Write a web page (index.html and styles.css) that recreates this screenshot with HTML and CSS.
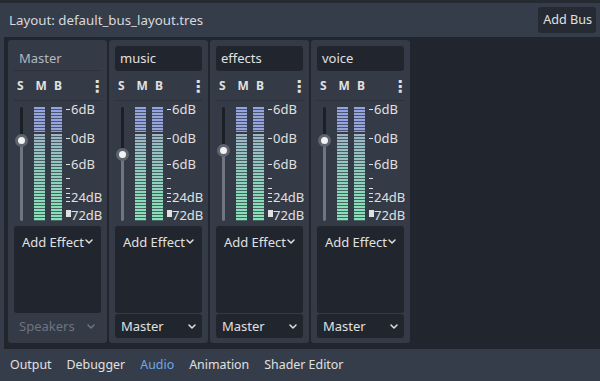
FILE: index.html
```html
<!DOCTYPE html>
<html lang="en">

<head>
    <meta charset="UTF-8">
    <meta name="viewport" content="width=device-width, initial-scale=1.0">
    <title>Audio Buses</title>
    <link rel="stylesheet" href="styles.css">
</head>

<body>
    <div class="editor">
        <div class="toolbar">
            <span class="layout_name">Layout: default_bus_layout.tres</span>
            <span class="add_bus">Add Bus</span>
        </div>

        <div class="buses">
            <div class="bus master">
                <div class="bus_name">Master</div>
                <div class="bus_toggles">
                    <span>S</span><span>M</span><span>B</span>
                    <span class="bus_more">&#8942;</span>
                </div>
                <div class="meter">
                    <div class="slider" style="--pos: 34px">
                        <div class="fill"></div>
                        <div class="grab"></div>
                    </div>
                    <div class="bar"></div>
                    <div class="bar"></div>
                    <div class="scale">
                        <i class="tick t1"></i><b class="l1">6dB</b>
                        <i class="tick t2"></i><b class="l2">0dB</b>
                        <i class="tick t3"></i><b class="l3">6dB</b>
                        <i class="tick t4"></i>
                        <i class="tick t5"></i>
                        <i class="tick t6"></i>
                        <i class="tick t7"></i><b class="l4">24dB</b>
                        <i class="tick t8"></i>
                        <i class="block"></i><b class="l5">72dB</b>
                    </div>
                </div>
                <div class="effects">
                    <div class="add_effect">Add Effect<svg width="8" height="5" viewBox="0 0 8 5"><path d="M1 1l3 3 3-3" fill="none" stroke="currentColor" stroke-width="1.5" stroke-linecap="round" stroke-linejoin="round"/></svg></div>
                </div>
                <div class="send disabled">Speakers<svg width="8" height="5" viewBox="0 0 8 5"><path d="M1 1l3 3 3-3" fill="none" stroke="currentColor" stroke-width="1.5" stroke-linecap="round" stroke-linejoin="round"/></svg></div>
            </div>

            <div class="bus">
                <div class="bus_name">music</div>
                <div class="bus_toggles">
                    <span>S</span><span>M</span><span>B</span>
                    <span class="bus_more">&#8942;</span>
                </div>
                <div class="meter">
                    <div class="slider" style="--pos: 48px">
                        <div class="fill"></div>
                        <div class="grab"></div>
                    </div>
                    <div class="bar"></div>
                    <div class="bar"></div>
                    <div class="scale">
                        <i class="tick t1"></i><b class="l1">6dB</b>
                        <i class="tick t2"></i><b class="l2">0dB</b>
                        <i class="tick t3"></i><b class="l3">6dB</b>
                        <i class="tick t4"></i>
                        <i class="tick t5"></i>
                        <i class="tick t6"></i>
                        <i class="tick t7"></i><b class="l4">24dB</b>
                        <i class="tick t8"></i>
                        <i class="block"></i><b class="l5">72dB</b>
                    </div>
                </div>
                <div class="effects">
                    <div class="add_effect">Add Effect<svg width="8" height="5" viewBox="0 0 8 5"><path d="M1 1l3 3 3-3" fill="none" stroke="currentColor" stroke-width="1.5" stroke-linecap="round" stroke-linejoin="round"/></svg></div>
                </div>
                <div class="send">Master<svg width="8" height="5" viewBox="0 0 8 5"><path d="M1 1l3 3 3-3" fill="none" stroke="currentColor" stroke-width="1.5" stroke-linecap="round" stroke-linejoin="round"/></svg></div>
            </div>

            <div class="bus">
                <div class="bus_name">effects</div>
                <div class="bus_toggles">
                    <span>S</span><span>M</span><span>B</span>
                    <span class="bus_more">&#8942;</span>
                </div>
                <div class="meter">
                    <div class="slider" style="--pos: 44px">
                        <div class="fill"></div>
                        <div class="grab"></div>
                    </div>
                    <div class="bar"></div>
                    <div class="bar"></div>
                    <div class="scale">
                        <i class="tick t1"></i><b class="l1">6dB</b>
                        <i class="tick t2"></i><b class="l2">0dB</b>
                        <i class="tick t3"></i><b class="l3">6dB</b>
                        <i class="tick t4"></i>
                        <i class="tick t5"></i>
                        <i class="tick t6"></i>
                        <i class="tick t7"></i><b class="l4">24dB</b>
                        <i class="tick t8"></i>
                        <i class="block"></i><b class="l5">72dB</b>
                    </div>
                </div>
                <div class="effects">
                    <div class="add_effect">Add Effect<svg width="8" height="5" viewBox="0 0 8 5"><path d="M1 1l3 3 3-3" fill="none" stroke="currentColor" stroke-width="1.5" stroke-linecap="round" stroke-linejoin="round"/></svg></div>
                </div>
                <div class="send">Master<svg width="8" height="5" viewBox="0 0 8 5"><path d="M1 1l3 3 3-3" fill="none" stroke="currentColor" stroke-width="1.5" stroke-linecap="round" stroke-linejoin="round"/></svg></div>
            </div>

            <div class="bus">
                <div class="bus_name">voice</div>
                <div class="bus_toggles">
                    <span>S</span><span>M</span><span>B</span>
                    <span class="bus_more">&#8942;</span>
                </div>
                <div class="meter">
                    <div class="slider" style="--pos: 34px">
                        <div class="fill"></div>
                        <div class="grab"></div>
                    </div>
                    <div class="bar"></div>
                    <div class="bar"></div>
                    <div class="scale">
                        <i class="tick t1"></i><b class="l1">6dB</b>
                        <i class="tick t2"></i><b class="l2">0dB</b>
                        <i class="tick t3"></i><b class="l3">6dB</b>
                        <i class="tick t4"></i>
                        <i class="tick t5"></i>
                        <i class="tick t6"></i>
                        <i class="tick t7"></i><b class="l4">24dB</b>
                        <i class="tick t8"></i>
                        <i class="block"></i><b class="l5">72dB</b>
                    </div>
                </div>
                <div class="effects">
                    <div class="add_effect">Add Effect<svg width="8" height="5" viewBox="0 0 8 5"><path d="M1 1l3 3 3-3" fill="none" stroke="currentColor" stroke-width="1.5" stroke-linecap="round" stroke-linejoin="round"/></svg></div>
                </div>
                <div class="send">Master<svg width="8" height="5" viewBox="0 0 8 5"><path d="M1 1l3 3 3-3" fill="none" stroke="currentColor" stroke-width="1.5" stroke-linecap="round" stroke-linejoin="round"/></svg></div>
            </div>
        </div>

        <div class="tabs">
            <span>Output</span>
            <span>Debugger</span>
            <span class="active">Audio</span>
            <span>Animation</span>
            <span>Shader Editor</span>
        </div>
    </div>
</body>

</html>
```

FILE: styles.css
```css
* {
    margin: 0;
    padding: 0;
    box-sizing: border-box;
}

body {
    background: #363d4a;
    font-family: "Noto Sans", "DejaVu Sans", sans-serif;
    font-size: 13px;
    color: #e0e0e0;
    overflow: hidden;
}

.editor {
    width: 600px;
    height: 381px;
    border-top: 3px solid #262b33;
    display: flex;
    flex-direction: column;
}

/* top toolbar */
.toolbar {
    height: 34px;
    display: flex;
    align-items: center;
    justify-content: space-between;
    padding: 0 4px 0 9px;
}

.layout_name {
    font-size: 13.3px;
    color: #d6d9de;
}

.add_bus {
    height: 26px;
    line-height: 26px;
    padding: 0 4px 0 5px;
    background: #262b33;
    border-radius: 3px;
    font-size: 12.6px;
}

/* bus list */
.buses {
    height: 312px;
    margin-left: 4px;
    padding: 3px 4px;
    background: #21252d;
    display: flex;
    gap: 2px;
}

.bus {
    width: 99px;
    height: 303px;
    padding: 6px 6px 4px;
    background: #343a46;
    border-radius: 3px;
    display: flex;
    flex-direction: column;
}

.bus_name {
    height: 25px;
    line-height: 25px;
    padding-left: 5px;
    background: #21252d;
    border-radius: 3px;
}

.master .bus_name {
    background: none;
    color: #b4b8bf;
    border-bottom: 1px solid #2b303a;
    border-radius: 0;
}

.bus_toggles {
    height: 30px;
    display: flex;
    align-items: center;
    padding-left: 3px;
    border-bottom: 1px solid #2b303a;
    font-weight: bold;
    font-size: 12px;
}

.bus_toggles span {
    width: 18.5px;
}

.bus_toggles .bus_more {
    margin-left: auto;
    width: 12px;
    font-size: 16px;
}

/* meter */
.meter {
    height: 116px;
    margin-top: 5px;
    display: flex;
}

.slider {
    width: 14px;
    position: relative;
}

.slider::before {
    content: "";
    position: absolute;
    left: 6px;
    top: 1px;
    bottom: 1px;
    width: 3px;
    border-radius: 2px;
    background: #1b1f26;
}

.slider .fill {
    position: absolute;
    left: 6px;
    top: var(--pos);
    bottom: 1px;
    width: 3px;
    border-radius: 2px;
    background: #70767f;
}

.slider .grab {
    position: absolute;
    left: 1px;
    top: calc(var(--pos) - 6px);
    width: 13px;
    height: 13px;
    border-radius: 50%;
    background: #5f656f;
    border: 3px solid #5f656f;
}

.slider .grab::after {
    content: "";
    display: block;
    width: 7px;
    height: 7px;
    border-radius: 50%;
    background: #f2f2f2;
}

.bar {
    width: 11px;
    margin: 1px 0 1px 6px;
    background:
        repeating-linear-gradient(to bottom, transparent 0 2px, rgba(52, 58, 70, 0.75) 2px 3px),
        linear-gradient(to bottom, #95a3de 0, #95a3de 25px, #343a46 25px, #343a46 27px, #9ab6c6 27px, #8fcfbd 70px, #86e3b6 100%);
}

.scale {
    flex: 1;
    margin-left: 2px;
    position: relative;
}

.scale .tick {
    position: absolute;
    left: 2px;
    width: 4px;
    height: 1px;
    background: #e0e0e0;
}

.scale .block {
    position: absolute;
    left: 2px;
    top: 104px;
    width: 5px;
    height: 7px;
    background: #e0e0e0;
}

.scale b {
    position: absolute;
    left: 7px;
    font-weight: normal;
    line-height: 14px;
}

.t1 { top: 3px; }
.t2 { top: 32px; }
.t3 { top: 58px; }
.t4 { top: 72px; }
.t5 { top: 82px; }
.t6 { top: 87px; }
.t7 { top: 91px; }
.t8 { top: 95px; }

.l1 { top: -4px; }
.l2 { top: 25px; }
.l3 { top: 51px; }
.l4 { top: 84px; }
.l5 { top: 102px; }

/* effects and send */
.effects {
    height: 87px;
    margin-top: 4px;
    background: #21252d;
    border-radius: 3px;
}

.add_effect {
    height: 31px;
    display: flex;
    align-items: center;
    justify-content: center;
    gap: 1px;
}

.send {
    height: 24px;
    margin-top: 1px;
    padding: 0 6px;
    background: #21252d;
    border-radius: 3px;
    display: flex;
    align-items: center;
    justify-content: space-between;
}

.send.disabled {
    background: none;
    color: #6e7480;
    padding-left: 5px;
}

/* bottom tabs */
.tabs {
    flex: 1;
    display: flex;
    align-items: center;
    gap: 15px;
    padding: 0 0 2px 10px;
    font-size: 12.4px;
}

.tabs .active {
    color: #6fa8e6;
}
```
